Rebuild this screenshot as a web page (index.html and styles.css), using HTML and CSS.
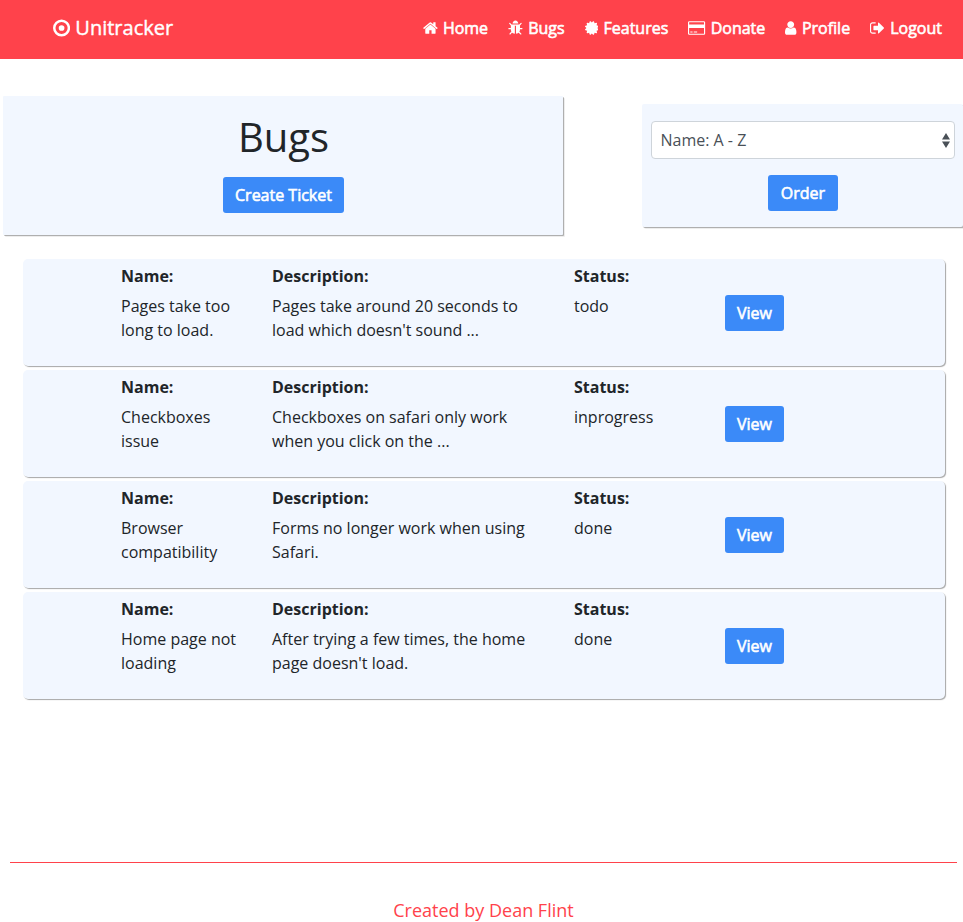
FILE: index.html
```
<!DOCTYPE html>
<html lang="en">
<head>
<meta charset="utf-8">
<title>Unitracker</title>
<link rel="stylesheet" href="styles.css">
</head>
<body>
<header class="navbar">
  <a class="brand"><svg class="icon" viewBox="128 0 1536 1792"><circle cx="896" cy="896" r="656" fill="none" stroke="currentColor" stroke-width="224"/><circle cx="896" cy="896" r="256"/></svg>Unitracker</a>
  <nav class="nav">
    <a><svg class="icon" viewBox="64 0 1664 1792"><path d="M1472 992v480q0 26-19 45t-45 19h-384v-384h-256v384h-384q-26 0-45-19t-19-45v-480q0-1 .5-3t.5-3l575-474 575 474q1 2 1 6zm223-69l-62 74q-8 9-21 11h-3q-13 0-21-7l-692-577-692 577q-12 8-24 7-13-2-21-11l-62-74q-8-10-7-23.5t11-21.5l719-599q32-26 76-26t76 26l244 204v-195q0-14 9-23t23-9h192q14 0 23 9t9 23v408l219 182q10 8 11 21.5t-7 23.5z"/></svg>Home</a>
    <a><svg class="icon" viewBox="64 0 1664 1792"><path d="M1696 960q0 26-19 45t-45 19h-224q0 171-67 290l208 209q19 19 19 45t-19 45q-18 19-45 19t-45-19l-198-197q-5 5-15 13t-42 28.5-65 36.5-82 29-97 13v-896h-128v896q-51 0-101.500-13.500t-87-33-66-39-43.500-32.500l-15-14-183 207q-20 21-48 21-24 0-43-16-19-18-20.500-44.500t15.500-46.500l202-227q-58-114-58-274h-224q-26 0-45-19t-19-45 19-45 45-19h224v-294l-173-173q-19-19-19-45t19-45 45-19 45 19l173 173h844l173-173q19-19 45-19t45 19 19 45-19 45l-173 173v294h224q26 0 45 19t19 45zm-480-576h-640q0-133 93.500-226.500t226.500-93.500 226.500 93.500 93.500 226.500z"/></svg>Bugs</a>
    <a><svg class="icon" viewBox="128 0 1536 1792"><path d="M1504 896l138 135q30 28 20 70-12 41-52 51l-188 48 53 186q12 41-19 70-29 31-70 19l-186-53-48 188q-10 40-51 52-12 2-19 2-31 0-51-22l-135-138-135 138q-28 30-70 20-41-11-51-52l-48-188-186 53q-41 12-70-19-31-29-19-70l53-186-188-48q-40-10-52-51-10-42 20-70l138-135-138-135q-30-28-20-70 12-41 52-51l188-48-53-186q-12-41 19-70 29-31 70-19l186 53 48-188q10-41 51-51 41-12 70 19l135 139 135-139q29-30 70-19 41 10 51 51l48 188 186-53q41-12 70 19 31 29 19 70l-53 186 188 48q40 10 52 51 10 42-20 70z"/></svg>Features</a>
    <a><svg class="icon" viewBox="0 0 1920 1792"><path d="M1760 128q66 0 113 47t47 113v1216q0 66-47 113t-113 47h-1600q-66 0-113-47t-47-113v-1216q0-66 47-113t113-47h1600zm-1600 128q-13 0-22.500 9.500t-9.500 22.500v224h1664v-224q0-13-9.500-22.500t-22.500-9.500h-1600zm1600 1280q13 0 22.500-9.500t9.500-22.500v-608h-1664v608q0 13 9.500 22.500t22.500 9.500h1600zm-1504-128v-128h256v128h-256zm384 0v-128h384v128h-384z"/></svg>Donate</a>
    <a><svg class="icon" viewBox="256 0 1280 1792"><path d="M1536 1399q0 109-62.500 187t-150.500 78h-854q-88 0-150.500-78t-62.500-187q0-85 8.500-160.500t31.500-152 58.500-131 94-89 134.500-34.500q131 128 313 128t313-128q76 0 134.500 34.500t94 89 58.500 131 31.500 152 8.500 160.500zm-256-887q0 159-112.500 271.500t-271.500 112.500-271.500-112.500-112.500-271.500 112.500-271.500 271.500-112.500 271.500 112.500 112.500 271.500z"/></svg>Profile</a>
    <a><svg class="icon" viewBox="64 0 1664 1792"><path d="M704 1440q0 4 1 20t.5 26.500-3 23.500-10 19.500-20.500 6.500h-320q-119 0-203.500-84.500t-84.500-203.500v-704q0-119 84.500-203.500t203.500-84.500h320q13 0 22.500 9.500t9.500 22.500q0 4 1 20t.5 26.500-3 23.500-10 19.500-20.500 6.500h-320q-66 0-113 47t-47 113v704q0 66 47 113t113 47h312l11.500 1 11.500 3 8 5.500 7 9 2 13.500zm928-544q0 26-19 45l-544 544q-19 19-45 19t-45-19-19-45v-288h-448q-26 0-45-19t-19-45v-384q0-26 19-45t45-19h448v-288q0-26 19-45t45-19 45 19l544 544q19 19 19 45z"/></svg>Logout</a>
  </nav>
</header>
<main>
  <section class="top">
    <div class="panel title-panel">
      <h1>Bugs</h1>
      <a class="btn">Create Ticket</a>
    </div>
    <form class="panel order-panel">
      <div class="select"><span>Name: A - Z</span><svg class="arrows" viewBox="0 0 8 15"><path d="M4 0L0 6.500h8zM4 15L0 8.500h8z"/></svg></div>
      <a class="btn">Order</a>
    </form>
  </section>
  <section class="tickets">
    <article class="ticket">
      <div><h2>Name:</h2><p>Pages take too long to load.</p></div>
      <div><h2>Description:</h2><p>Pages take around 20 seconds to load which doesn't sound ...</p></div>
      <div><h2>Status:</h2><p>todo</p></div>
      <div class="action"><a class="btn">View</a></div>
    </article>
    <article class="ticket">
      <div><h2>Name:</h2><p>Checkboxes issue</p></div>
      <div><h2>Description:</h2><p>Checkboxes on safari only work when you click on the ...</p></div>
      <div><h2>Status:</h2><p>inprogress</p></div>
      <div class="action"><a class="btn">View</a></div>
    </article>
    <article class="ticket">
      <div><h2>Name:</h2><p>Browser compatibility</p></div>
      <div><h2>Description:</h2><p>Forms no longer work when using Safari.</p></div>
      <div><h2>Status:</h2><p>done</p></div>
      <div class="action"><a class="btn">View</a></div>
    </article>
    <article class="ticket">
      <div><h2>Name:</h2><p>Home page not loading</p></div>
      <div><h2>Description:</h2><p>After trying a few times, the home page doesn't load.</p></div>
      <div><h2>Status:</h2><p>done</p></div>
      <div class="action"><a class="btn">View</a></div>
    </article>
  </section>
</main>
<footer class="footer">Created by Dean Flint</footer>
</body>
</html>
```
FILE: styles.css
```
* { box-sizing: border-box; }
html, body { height: 100%; }
body {
  margin: 0;
  display: flex;
  flex-direction: column;
  overflow: hidden;
  font: 16px/24px "Open Sans", sans-serif;
  color: #212529;
  background: #fff;
}
h1, h2, p { margin: 0; }
.navbar {
  display: flex;
  justify-content: space-between;
  align-items: center;
  flex: none;
  height: 59px;
  padding: 0 21px 3px 53px;
  background: #ff424b;
  color: #fff;
}
.brand { font-size: 20px; line-height: 30px; -webkit-text-stroke: 0.4px #fff; }
.nav { display: flex; gap: 20.1px; -webkit-text-stroke: 0.6px #fff; }
.nav a { white-space: nowrap; }
.icon {
  height: 1em;
  width: auto;
  margin-right: 0.26em;
  vertical-align: -0.143em;
  fill: currentColor;
}
.nav .icon { margin-right: 0.32em; }
.top {
  display: flex;
  justify-content: space-between;
  align-items: flex-start;
  padding: 37px 0 0 3px;
}
.panel {
  background: #f2f7ff;
  border-radius: 2px;
  box-shadow: 1px 1px 0 rgba(0, 0, 0, 0.26), 2px 2px 0 rgba(0, 0, 0, 0.07);
  text-align: center;
}
.title-panel { width: 560px; height: 139px; padding: 17px 0 0 1px; border-radius: 1px; }
.title-panel h1 { font-size: 40px; font-weight: 400; line-height: 48px; margin-bottom: 16px; }
.order-panel { width: 321px; height: 123px; margin-top: 8px; padding: 17px 8px 0 9px; }
.order-panel .btn { padding: 0 12.5px; }
.select {
  display: flex;
  justify-content: space-between;
  align-items: center;
  height: 38px;
  margin-bottom: 16px;
  padding: 0 4px 0 8.5px;
  border: 1px solid #ced4da;
  border-radius: 4px;
  background: #fff;
  color: #495057;
}
.arrows { width: 8px; height: 15px; fill: #495057; }
.btn {
  display: inline-block;
  height: 36px;
  padding: 0 12px;
  border-radius: 3px;
  background: #3b8af8;
  color: #fff;
  line-height: 36px;
  -webkit-text-stroke: 0.6px #fff;
}
.tickets { display: flex; flex-direction: column; gap: 4px; padding: 24px 18px 0 23px; }
.ticket {
  display: grid;
  grid-template-columns: 151px 302px 151px 151px;
  height: 107px;
  padding: 5px 0 0 83px;
  border-radius: 5px;
  background: #f2f7ff;
  box-shadow: 1px 1px 1px rgba(0, 0, 0, 0.35);
}
.ticket > div { padding: 0 15px; }
.ticket h2 { font-size: 16px; font-weight: 700; line-height: 24px; margin-bottom: 6px; }
.ticket .action { padding-top: 31px; }
.footer {
  flex: none;
  height: 60px;
  margin: auto 6px 0 10px;
  padding-top: 34px;
  border-top: 1px solid #ff424b;
  color: #ff424b;
  font-size: 18px;
  line-height: 27px;
  text-align: center;
}
```
